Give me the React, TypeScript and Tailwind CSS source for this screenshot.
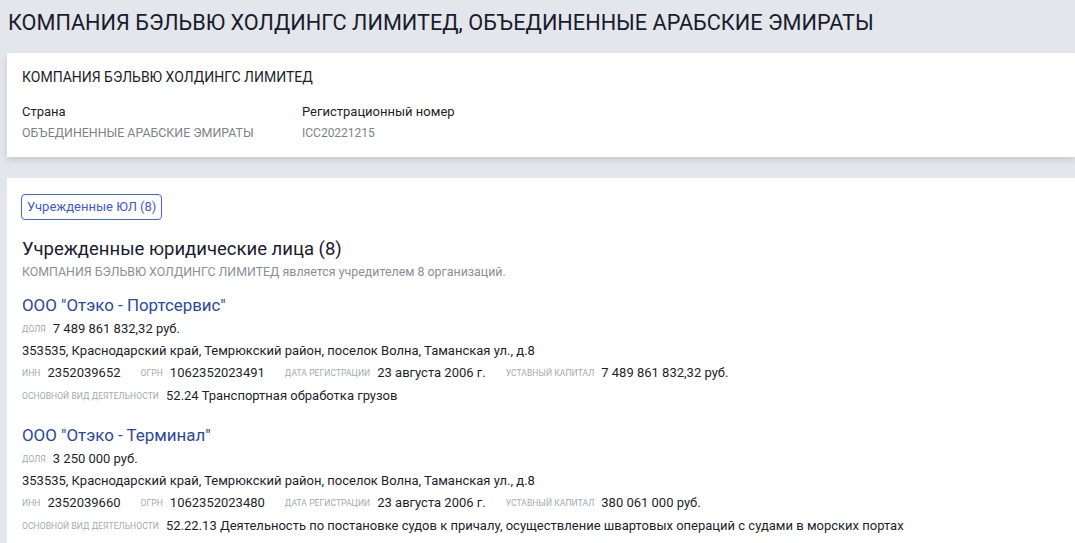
import * as React from "react";

type Company = {
  name: string;
  share: string;
  address: string;
  inn: string;
  ogrn: string;
  regDate: string;
  capital: string;
  activity: string;
};

const companies: Company[] = [
  {
    name: 'ООО "Отэко - Портсервис"',
    share: "7 489 861 832,32 руб.",
    address: "353535, Краснодарский край, Темрюкский район, поселок Волна, Таманская ул., д.8",
    inn: "2352039652",
    ogrn: "1062352023491",
    regDate: "23 августа 2006 г.",
    capital: "7 489 861 832,32 руб.",
    activity: "52.24 Транспортная обработка грузов",
  },
  {
    name: 'ООО "Отэко - Терминал"',
    share: "3 250 000 руб.",
    address: "353535, Краснодарский край, Темрюкский район, поселок Волна, Таманская ул., д.8",
    inn: "2352039660",
    ogrn: "1062352023480",
    regDate: "23 августа 2006 г.",
    capital: "380 061 000 руб.",
    activity:
      "52.22.13 Деятельность по постановке судов к причалу, осуществление швартовых операций с судами в морских портах",
  },
];

const Label = ({ children }: { children: React.ReactNode }) => (
  <span className="mr-[7px] text-[8.5px] uppercase tracking-[0.01em] text-[#a3a8b0]">{children}</span>
);

const Value = ({ children }: { children: React.ReactNode }) => (
  <span className="text-[13px] text-[#1c1f2b]">{children}</span>
);

const CompanyItem = ({ c }: { c: Company }) => (
  <div className="flex flex-col">
    <a className="h-[22px] text-[16.9px] leading-[22px] text-[#2b48a0]">{c.name}</a>
    <div className="mt-[2px] flex h-[22px] items-center">
      <Label>доля</Label>
      <Value>{c.share}</Value>
    </div>
    <div className="flex h-[22px] items-center">
      <Value>{c.address}</Value>
    </div>
    <div className="flex h-[22px] items-center gap-[20px]">
      <div className="flex items-center">
        <Label>ИНН</Label>
        <Value>{c.inn}</Value>
      </div>
      <div className="flex items-center">
        <Label>ОГРН</Label>
        <Value>{c.ogrn}</Value>
      </div>
      <div className="flex items-center">
        <Label>Дата регистрации</Label>
        <Value>{c.regDate}</Value>
      </div>
      <div className="flex items-center">
        <Label>Уставный капитал</Label>
        <Value>{c.capital}</Value>
      </div>
    </div>
    <div className="mt-[1px] flex h-[22px] items-center">
      <Label>Основной вид деятельности</Label>
      <Value>{c.activity}</Value>
    </div>
  </div>
);

export default function App() {
  return (
    <div
      className="min-h-screen overflow-hidden bg-[#e3e6ea] text-[#1c1f2b]"
      style={{ fontFamily: "Roboto, 'Noto Sans', sans-serif" }}
    >
      <h1 className="flex h-[53px] items-center px-[8px] pb-[6px] text-[21.7px] text-[#1a1b2e]">
        КОМПАНИЯ БЭЛЬВЮ ХОЛДИНГС ЛИМИТЕД, ОБЪЕДИНЕННЫЕ АРАБСКИЕ ЭМИРАТЫ
      </h1>

      <section className="ml-[7px] bg-white px-[15px] pb-[14px] pt-[14px] shadow-[0_3px_6px_rgba(0,0,0,0.12)]">
        <div className="h-[20px] text-[14px] leading-[20px]">КОМПАНИЯ БЭЛЬВЮ ХОЛДИНГС ЛИМИТЕД</div>
        <div className="mt-[15px] flex">
          <div className="w-[280px]">
            <div className="h-[20px] text-[13px] leading-[20px]">Страна</div>
            <div className="mt-[1px] h-[20px] text-[12.4px] leading-[20px] text-[#7d828a]">
              ОБЪЕДИНЕННЫЕ АРАБСКИЕ ЭМИРАТЫ
            </div>
          </div>
          <div>
            <div className="h-[20px] text-[13px] leading-[20px]">Регистрационный номер</div>
            <div className="mt-[1px] h-[20px] text-[12px] leading-[20px] text-[#7d828a]">ICC20221215</div>
          </div>
        </div>
      </section>

      <section className="ml-[7px] mt-[21px] bg-white px-[15px] pb-[20px] pt-[16px]">
        <button className="-ml-[1px] h-[26px] rounded-[4px] border border-[#4466e0] px-[5px] text-[13px] text-[#3d5bd6]">
          Учрежденные ЮЛ (8)
        </button>
        <h2 className="mt-[17px] h-[24px] text-[18.5px] leading-[24px] text-[#1a1b2e]">
          Учрежденные юридические лица (8)
        </h2>
        <p className="mt-[2px] h-[18px] text-[12.4px] leading-[18px] text-[#8a8f97]">
          КОМПАНИЯ БЭЛЬВЮ ХОЛДИНГС ЛИМИТЕД является учредителем 8 организаций.
        </p>
        <div className="mt-[13px] flex flex-col gap-[17px]">
          {companies.map((c) => (
            <CompanyItem key={c.inn} c={c} />
          ))}
        </div>
      </section>
    </div>
  );
}
